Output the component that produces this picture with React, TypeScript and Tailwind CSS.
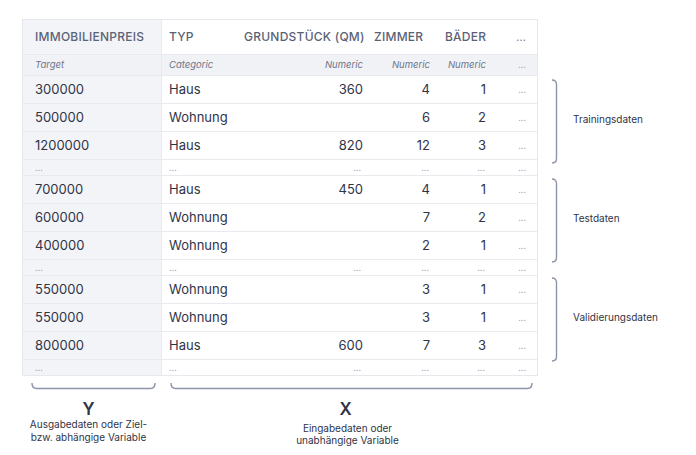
const font = { fontFamily: "Inter, 'Noto Sans', sans-serif" };

type Row = { preis: string; typ: string; qm: string; zimmer: string; baeder: string };

const groups: Row[][] = [
  [
    { preis: "300000", typ: "Haus", qm: "360", zimmer: "4", baeder: "1" },
    { preis: "500000", typ: "Wohnung", qm: "", zimmer: "6", baeder: "2" },
    { preis: "1200000", typ: "Haus", qm: "820", zimmer: "12", baeder: "3" },
  ],
  [
    { preis: "700000", typ: "Haus", qm: "450", zimmer: "4", baeder: "1" },
    { preis: "600000", typ: "Wohnung", qm: "", zimmer: "7", baeder: "2" },
    { preis: "400000", typ: "Wohnung", qm: "", zimmer: "2", baeder: "1" },
  ],
  [
    { preis: "550000", typ: "Wohnung", qm: "", zimmer: "3", baeder: "1" },
    { preis: "550000", typ: "Wohnung", qm: "", zimmer: "3", baeder: "1" },
    { preis: "800000", typ: "Haus", qm: "600", zimmer: "7", baeder: "3" },
  ],
];

const cols = "grid grid-cols-[139px_75px_130px_71px_56px_43px]";

function DataRow({ r }: { r: Row }) {
  return (
    <div className={`${cols} h-[28px] items-stretch border-t border-[#e8eaf0] text-[13px] text-[#2f3447]`}>
      <div className="flex items-center border-r border-[#e8eaf0] bg-[#f3f4f8] pl-[12px]">{r.preis}</div>
      <div className="flex items-center pl-[7px]">{r.typ}</div>
      <div className="flex items-center justify-end pr-[4px]">{r.qm}</div>
      <div className="flex items-center justify-end pr-[8px]">{r.zimmer}</div>
      <div className="flex items-center justify-end pr-[8px]">{r.baeder}</div>
      <div className="flex items-center justify-end pr-[11px] text-[9px] text-[#a3a8b8]">...</div>
    </div>
  );
}

function DotsRow() {
  return (
    <div className={`${cols} h-[16px] items-stretch border-t border-[#e8eaf0] text-[9px] leading-none text-[#a3a8b8]`}>
      <div className="flex items-center border-r border-[#e8eaf0] bg-[#f3f4f8] pl-[12px]">...</div>
      <div className="flex items-center pl-[7px]">...</div>
      <div className="flex items-center justify-end pr-[6px]">...</div>
      <div className="flex items-center justify-end pr-[9px]">...</div>
      <div className="flex items-center justify-end pr-[9px]">...</div>
      <div className="flex items-center justify-end pr-[11px]">...</div>
    </div>
  );
}

function SideBracket({ label }: { label: string }) {
  return (
    <div className="flex h-[85px] items-center">
      <svg width="9" height="85" viewBox="0 0 9 85" className="shrink-0">
        <path d="M2 1 Q6.5 1 6.5 5.5 V79.5 Q6.5 84 2 84" fill="none" stroke="#8e94a9" strokeWidth="1.4" />
      </svg>
      <span className="mb-[5px] ml-[14px] text-[10px] text-[#2f3447]">{label}</span>
    </div>
  );
}

function BottomBracket({ width }: { width: number }) {
  return (
    <svg width={width} height="9" viewBox={`0 0 ${width} 9`}>
      <path
        d={`M1 1 Q1 6.5 5.5 6.5 H${width - 5.5} Q${width - 1} 6.5 ${width - 1} 1`}
        fill="none"
        stroke="#8e94a9"
        strokeWidth="1.4"
      />
    </svg>
  );
}

export default function App() {
  return (
    <div className="h-[455px] w-[696px] overflow-hidden bg-white" style={font}>
      <div className="flex pl-[22px] pt-[19px]">
        <div className="w-[516px] shrink-0">
          <div className="border border-[#e6e8ee]">
            <div className={`${cols} h-[34px] items-stretch text-[12px] font-medium tracking-[0.02em] text-[#5b6275]`}>
              <div className="flex items-center border-r border-[#e8eaf0] bg-[#f3f4f8] pl-[12px]">IMMOBILIENPREIS</div>
              <div className="flex items-center pl-[7px]">TYP</div>
              <div className="flex items-center pl-[7px]">GRUNDSTÜCK (QM)</div>
              <div className="flex items-center pl-[7px]">ZIMMER</div>
              <div className="flex items-center pl-[7px]">BÄDER</div>
              <div className="flex items-center justify-end pr-[11px] text-[10px] text-[#7b8196]">...</div>
            </div>
            <div className={`${cols} h-[21px] items-stretch border-t border-[#e8eaf0] bg-[#f1f2f6] text-[9.5px] italic text-[#6e7488]`}>
              <div className="flex items-center border-r border-[#e8eaf0] pl-[12px]">Target</div>
              <div className="flex items-center pl-[7px]">Categoric</div>
              <div className="flex items-center justify-end pr-[4px]">Numeric</div>
              <div className="flex items-center justify-end pr-[8px]">Numeric</div>
              <div className="flex items-center justify-end pr-[8px]">Numeric</div>
              <div className="flex items-center justify-end pr-[11px] not-italic text-[9px] text-[#a3a8b8]">...</div>
            </div>
            {groups.map((g, i) => (
              <div key={i}>
                {g.map((r, j) => (
                  <DataRow key={j} r={r} />
                ))}
                <DotsRow />
              </div>
            ))}
          </div>

          <div className="mt-[6px] flex">
            <div className="flex w-[133px] flex-col items-center">
              <div className="pl-[9px]">
                <BottomBracket width={125} />
              </div>
              <div className="mt-[10px] text-[17px] font-semibold leading-[16px] text-[#2f3447]">Y</div>
              <div className="mt-[1px] text-center text-[10px] leading-[13px] text-[#2f3447]">
                Ausgabedaten oder Ziel-
                <br />
                bzw. abhängige Variable
              </div>
            </div>
            <div className="ml-[15px] flex w-[363px] flex-col items-center">
              <BottomBracket width={363} />
              <div className="mt-[10px] pr-[12px] text-[17px] font-semibold leading-[16px] text-[#2f3447]">X</div>
              <div className="mt-[5px] pr-[8px] text-center text-[10px] leading-[12px] text-[#2f3447]">
                Eingabedaten oder
                <br />
                unabhängige Variable
              </div>
            </div>
          </div>
        </div>

        <div className="ml-[12px] flex flex-col gap-[14px] pt-[60px]">
          <SideBracket label="Trainingsdaten" />
          <SideBracket label="Testdaten" />
          <SideBracket label="Validierungsdaten" />
        </div>
      </div>
    </div>
  );
}
